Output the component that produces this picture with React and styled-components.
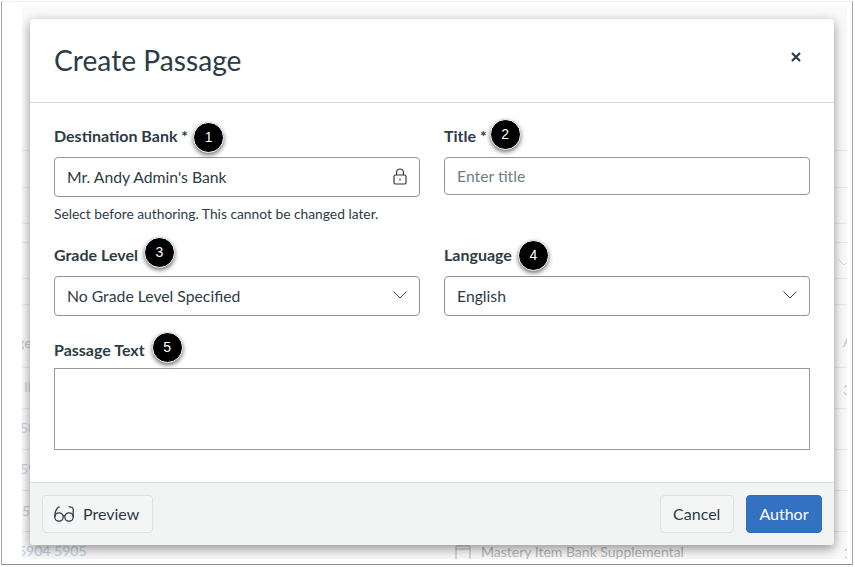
import React from "react";
import styled, { createGlobalStyle } from "styled-components";

const GlobalStyle = createGlobalStyle`
  html, body {
    margin: 0;
    padding: 0;
    background: #fff;
    font-family: Lato, "Liberation Sans", sans-serif;
  }
`;

const Screenshot = styled.div`
  box-sizing: border-box;
  width: 855px;
  height: 567px;
  padding: 1px 2px 2px 1px;
  background: #fff;
  overflow: hidden;
`;

const Frame = styled.div`
  box-sizing: border-box;
  width: 100%;
  height: 100%;
  padding: 5px 5px 5px 20px;
  background: #fff;
  border-left: 1px solid #a5a7a9;
  border-right: 1px solid #a5a7a9;
  border-bottom: 1px solid #8f9193;
  border-top: 1px solid #eceded;
`;

const Backdrop = styled.div`
  position: relative;
  box-sizing: border-box;
  width: 100%;
  height: 100%;
  padding: 12px 13px 14px 8px;
  background: #f9f9f9;
  overflow: hidden;
`;

const GhostRule = styled.div`
  position: absolute;
  left: 0;
  right: 0;
  top: ${(p) => p.$top}px;
  height: 1px;
  background: #e6e7e9;
`;

const GhostText = styled.span`
  position: absolute;
  white-space: nowrap;
  left: ${(p) => p.$left}px;
  top: ${(p) => p.$top}px;
  font-size: 14px;
  line-height: 18px;
  color: ${(p) => p.$color || "#c3cfe2"};
`;

const GhostIcon = styled.svg`
  position: absolute;
  left: ${(p) => p.$left}px;
  top: ${(p) => p.$top}px;
`;

const Modal = styled.div`
  position: relative;
  box-sizing: border-box;
  display: flex;
  flex-direction: column;
  height: 100%;
  background: #fff;
  border-radius: 4px;
  box-shadow: 0 5px 12px rgba(0, 0, 0, 0.3), 0 1px 8px rgba(0, 0, 0, 0.14);
  color: #2d3b45;
  overflow: hidden;
`;

const Header = styled.header`
  box-sizing: border-box;
  display: flex;
  align-items: center;
  justify-content: space-between;
  height: 84px;
  padding: 0 33px 0 24px;
  border-bottom: 1px solid #d7dade;
`;

const Heading = styled.h1`
  margin: 0 0 2px;
  font-size: 28.2px;
  font-weight: 400;
  line-height: 36px;
`;

const CloseIcon = styled.svg`
  display: block;
  margin-bottom: 8px;
`;

const Body = styled.div`
  box-sizing: border-box;
  flex: 1;
  display: flex;
  flex-direction: column;
  padding: 21px 24px 0;
`;

const FieldRow = styled.div`
  display: grid;
  grid-template-columns: 366px 366px;
  column-gap: 24px;
  margin-bottom: ${(p) => p.$gap}px;
`;

const Field = styled.div`
  display: flex;
  flex-direction: column;
`;

const LabelRow = styled.div`
  display: flex;
  align-items: center;
  height: 24px;
  margin-bottom: ${(p) => p.$gap}px;
`;

const Label = styled.label`
  font-size: 16px;
  font-weight: 700;
  line-height: 24px;
  white-space: nowrap;
`;

const Callout = styled.span`
  box-sizing: border-box;
  display: flex;
  flex: none;
  align-items: center;
  justify-content: center;
  width: 31px;
  height: 31px;
  margin-left: ${(p) => p.$gap}px;
  transform: translateY(${(p) => p.$shift}px);
  border-radius: 50%;
  background: #000;
  border: 1px solid #fff;
  box-shadow: 0 2px 4px rgba(0, 0, 0, 0.55);
  color: #fff;
  font-family: "Liberation Sans", sans-serif;
  font-size: 14px;
  line-height: 1;
`;

const Control = styled.div`
  box-sizing: border-box;
  display: flex;
  align-items: center;
  justify-content: space-between;
  height: ${(p) => p.$height}px;
  padding: 0 12px 2px;
  border: 1px solid #8b969e;
  border-radius: 4px;
  background: #fff;
  font-size: 15.75px;
  color: ${(p) => (p.$placeholder ? "#6f7d88" : "#2d3b45")};
`;

const Hint = styled.p`
  margin: 7px 0 0;
  font-size: 13.8px;
  line-height: 20px;
  color: #2d3b45;
`;

const TextArea = styled.div`
  box-sizing: border-box;
  height: 82px;
  border: 1px solid #9b9b9b;
  background: #fff;
`;

const Footer = styled.footer`
  box-sizing: border-box;
  display: flex;
  align-items: center;
  justify-content: space-between;
  height: 63px;
  padding: 0 12px;
  background: #f2f3f3;
  border-top: 1px solid #d7dade;
`;

const ButtonGroup = styled.div`
  display: flex;
  gap: 12px;
`;

const Button = styled.button`
  box-sizing: border-box;
  display: flex;
  align-items: center;
  gap: 9px;
  height: 38px;
  padding: 0 12.5px;
  border: 1px solid ${(p) => (p.$primary ? "#2f6fbd" : "#dfe1e3")};
  border-radius: 4px;
  background: ${(p) => (p.$primary ? "#3371c2" : "#f4f5f5")};
  color: ${(p) => (p.$primary ? "#fff" : "#2d3b45")};
  font-family: inherit;
  font-size: 16px;
  line-height: 20px;
`;

const PreviewButton = styled(Button)`
  padding-left: 11px;
`;

const ChevronDown = () => (
  <svg width="14" height="8" viewBox="0 0 14 8" fill="none" stroke="#3b4852" strokeWidth="1">
    <path d="M0.5 0.5 L7 7 L13.5 0.5" />
  </svg>
);

const LockIcon = () => (
  <svg width="14" height="17" viewBox="0 0 14 17" fill="none" stroke="#2d3b45" strokeWidth="1.2">
    <rect x="1" y="7" width="12" height="9" rx="1.6" />
    <path d="M3.6 7 V4.4 A3.4 3.4 0 0 1 10.4 4.4 V7" />
    <path d="M7 10.5 V12.5" />
  </svg>
);

const GlassesIcon = () => (
  <svg width="20" height="16" viewBox="0 0 20 16" fill="none" stroke="#2d3b45" strokeWidth="1.25">
    <circle cx="5" cy="11" r="4.2" />
    <circle cx="15" cy="11" r="4.2" />
    <path d="M9 10 C9.6 9.5 10.4 9.5 11 10" />
    <path d="M0.8 11 C0.8 6.5 1.8 2.2 5.6 0.7" />
    <path d="M19.2 11 V3.6 C19.2 1.6 17.4 0.4 14.6 0.9" />
  </svg>
);

export default function App() {
  return (
    <Screenshot>
      <GlobalStyle />
      <Frame>
        <Backdrop>
          {[143, 180, 216, 235, 271, 297, 360, 401, 442, 483, 524].map((top) => (
            <GhostRule key={top} $top={top} />
          ))}
          <GhostText $left={-5} $top={327} $color="#c6c8ca">ge</GhostText>
          <GhostText $left={2} $top={371}>Il</GhostText>
          <GhostText $left={-2} $top={412}>58</GhostText>
          <GhostText $left={-2} $top={453}>59</GhostText>
          <GhostText $left={0} $top={495}>5</GhostText>
          <GhostText $left={-4} $top={535}>5904 5905</GhostText>
          <GhostText $left={459} $top={536} $color="#b5b6b8">Mastery Item Bank Supplemental</GhostText>
          <GhostIcon $left={433} $top={537} width="16" height="15" viewBox="0 0 16 15" fill="none" stroke="#b5b6b8" strokeWidth="1">
            <path d="M1 15 V2 H15 V15 M1 5 H15 M5 2 V0 M11 2 V0" />
          </GhostIcon>
          <GhostIcon $left={815} $top={251} width="14" height="8" viewBox="0 0 14 8" fill="none" stroke="#d5d6d8" strokeWidth="1">
            <path d="M0.5 0.5 L7 7 L13.5 0.5" />
          </GhostIcon>
          <GhostText $left={821} $top={374}>3</GhostText>
          <GhostText $left={821} $top={326} $color="#c6c8ca">A</GhostText>
          <GhostText $left={821} $top={537}>1</GhostText>
          <Modal>
            <Header>
              <Heading>Create Passage</Heading>
              <CloseIcon width="10" height="10" viewBox="0 0 10 10" fill="none" stroke="#2d3b45" strokeWidth="2.2">
                <path d="M1 1 L9 9 M9 1 L1 9" />
              </CloseIcon>
            </Header>
            <Body>
              <FieldRow $gap={19}>
                <Field>
                  <LabelRow $gap={9}>
                    <Label>Destination Bank *</Label>
                    <Callout $gap={5} $shift={1}>1</Callout>
                  </LabelRow>
                  <Control $height={40}>
                    Mr. Andy Admin's Bank
                    <LockIcon />
                  </Control>
                  <Hint>Select before authoring. This cannot be changed later.</Hint>
                </Field>
                <Field>
                  <LabelRow $gap={9}>
                    <Label>Title *</Label>
                    <Callout $gap={3} $shift={-2}>2</Callout>
                  </LabelRow>
                  <Control $height={38} $placeholder>Enter title</Control>
                </Field>
              </FieldRow>
              <FieldRow $gap={22}>
                <Field>
                  <LabelRow $gap={9}>
                    <Label>Grade Level</Label>
                    <Callout $gap={6} $shift={-3}>3</Callout>
                  </LabelRow>
                  <Control $height={40}>
                    No Grade Level Specified
                    <ChevronDown />
                  </Control>
                </Field>
                <Field>
                  <LabelRow $gap={9}>
                    <Label>Language</Label>
                    <Callout $gap={6} $shift={0}>4</Callout>
                  </LabelRow>
                  <Control $height={40}>
                    English
                    <ChevronDown />
                  </Control>
                </Field>
              </FieldRow>
              <Field>
                <LabelRow $gap={6}>
                  <Label>Passage Text</Label>
                  <Callout $gap={7} $shift={-3}>5</Callout>
                </LabelRow>
                <TextArea />
              </Field>
            </Body>
            <Footer>
              <PreviewButton>
                <GlassesIcon />
                Preview
              </PreviewButton>
              <ButtonGroup>
                <Button>Cancel</Button>
                <Button $primary>Author</Button>
              </ButtonGroup>
            </Footer>
          </Modal>
        </Backdrop>
      </Frame>
    </Screenshot>
  );
}
